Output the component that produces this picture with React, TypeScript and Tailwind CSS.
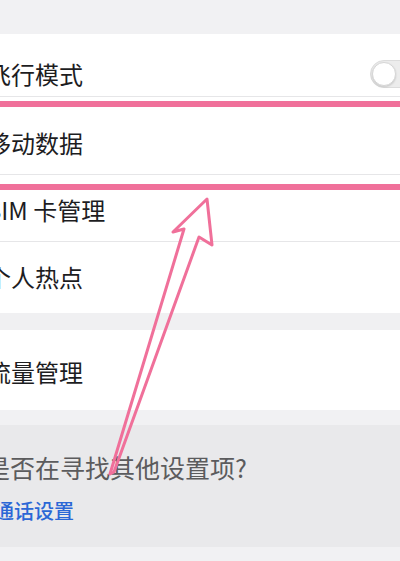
import React from "react";

const font = { fontFamily: '"Noto Sans CJK SC", "Noto Sans", sans-serif' };

function Row({
  label,
  h,
  pt,
  border = true,
  children,
}: {
  label: string;
  h: number;
  pt: number;
  border?: boolean;
  children?: React.ReactNode;
}) {
  return (
    <div
      className={`flex items-start justify-between bg-white ${border ? "border-b border-[#e6e6e8]" : ""}`}
      style={{ height: h, paddingTop: pt }}
    >
      <span className="ml-[-13px] whitespace-nowrap text-[24px] leading-[24px] text-[#1d1d1f]">
        {label}
      </span>
      {children}
    </div>
  );
}

export default function App() {
  return (
    <div
      className="relative h-[561px] w-[400px] overflow-hidden bg-[#f2f2f4]"
      style={font}
    >
      <div className="h-[34px] bg-[#f1f1f3]" />
      <Row label="飞行模式" h={63} pt={28}>
        <div className="mr-[-34px] mt-[-2px] flex h-[28px] w-[64px] items-center rounded-full border border-[#dcdcdc] bg-[#ececec] pl-[1px]">
          <div className="h-[24px] w-[24px] rounded-full border border-[#d6d6d6] bg-white shadow-[0_1px_2px_rgba(0,0,0,0.15)]" />
        </div>
      </Row>
      <Row label="移动数据" h={78} pt={34} />
      <Row label="SIM 卡管理" h={67} pt={23} />
      <Row label="个人热点" h={71} pt={23} border={false} />
      <div className="h-[17px] bg-[#f0f0f2]" />
      <Row label="流量管理" h={80} pt={30} border={false} />
      <div className="h-[15px] bg-[#f1f1f3]" />
      <div className="flex h-[122px] flex-col bg-[#e9e9eb] pt-[30px]">
        <span className="ml-[-15px] whitespace-nowrap text-[25px] leading-[24px] text-[#5b5b5d]">
          是否在寻找其他设置项?
        </span>
        <span className="ml-[-6px] mt-[22px] whitespace-nowrap text-[20px] font-medium leading-[20px] text-[#2b67d6]">
          通话设置
        </span>
      </div>
      <div className="h-[14px] bg-[#f1f1f3]" />

      <svg
        className="pointer-events-none absolute left-0 top-0"
        width="400"
        height="561"
        viewBox="0 0 400 561"
      >
        <line x1="0" y1="104" x2="400" y2="104" stroke="#f0709a" strokeWidth="6" />
        <line x1="0" y1="187" x2="400" y2="187" stroke="#f0709a" strokeWidth="6" />
        <polygon
          points="110,474 184,229 173,232 207,199 212,245 199,237 114,472"
          fill="none"
          stroke="#f0709a"
          strokeWidth="3"
          strokeLinejoin="round"
        />
      </svg>
    </div>
  );
}
